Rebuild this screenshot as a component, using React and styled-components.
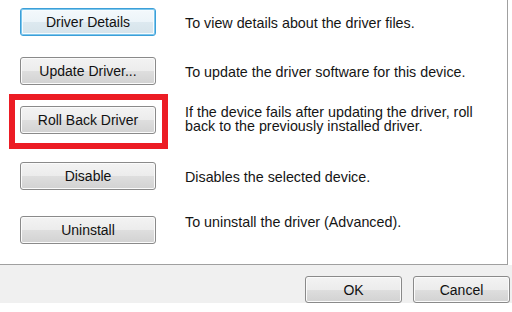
import styled, { createGlobalStyle } from "styled-components";

const GlobalStyle = createGlobalStyle`
    html, body {
        margin: 0;
        padding: 0;
        background: #ffffff;
    }
    body {
        font-family: "Liberation Sans", Arial, sans-serif;
    }
`;

const Page = styled.div`
    width: 512px;
    height: 312px;
    overflow: hidden;
    background: #ffffff;
    display: flex;
    flex-direction: column;
`;

const Panel = styled.div`
    width: 508px;
    height: 265px;
    box-sizing: border-box;
    background: #ffffff;
    border-right: 1px solid #a0a0a0;
    border-bottom: 1px solid #a0a0a0;
    padding: 8px 0 0 20px;
    display: flex;
    flex-direction: column;
`;

const Row = styled.div`
    display: flex;
    align-items: center;
    gap: 29px;
    margin-top: ${(p) => p.$space}px;
`;

const Button = styled.button`
    box-sizing: border-box;
    width: ${(p) => p.$width || 136}px;
    height: ${(p) => p.$height || 28}px;
    flex-shrink: 0;
    padding: 0;
    font-family: "Liberation Sans", Arial, sans-serif;
    font-size: 14px;
    color: #111;
    border-radius: 3px;
    border: 1px solid ${(p) => (p.$focused ? "#3c9fd8" : "#8a8a8a")};
    background: ${(p) =>
        p.$focused
            ? "linear-gradient(#f4f9fc 0%, #ecf4f9 50%, #dde9f0 51%, #d6e3ea 100%)"
            : "linear-gradient(#f3f3f3 0%, #ececec 50%, #dedede 51%, #d2d2d2 100%)"};
    box-shadow: ${(p) =>
        p.$focused
            ? "inset 0 0 0 1px #7cc6ec, inset 0 0 0 2px #f6fbfe"
            : "inset 0 0 0 1px #fbfbfb"};
`;

const Highlight = styled.span`
    position: relative;
    display: inline-flex;

    &::after {
        content: "";
        position: absolute;
        top: -12px;
        left: -11px;
        right: -12px;
        bottom: -15px;
        border: 6px solid #ec1c24;
        pointer-events: none;
    }
`;

const Description = styled.div`
    font-size: 14.3px;
    line-height: 14px;
    color: #151515;
    align-self: ${(p) => (p.$top ? "flex-start" : "center")};
    margin-top: ${(p) => (p.$top ? "-1px" : "2px")};
    width: 300px;
`;

const Footer = styled.div`
    height: 38px;
    box-sizing: border-box;
    background: #f0f0f0;
    display: flex;
    justify-content: flex-end;
    gap: 11px;
    padding: 11px 2px 0 0;
`;

const rows = [
    { label: "Driver Details", text: "To view details about the driver files.", space: 0, focused: true },
    { label: "Update Driver...", text: "To update the driver software for this device.", space: 21 },
    {
        label: "Roll Back Driver",
        text: "If the device fails after updating the driver, roll back to the previously installed driver.",
        space: 21,
        top: true,
        marked: true,
    },
    { label: "Disable", text: "Disables the selected device.", space: 28 },
    { label: "Uninstall", text: "To uninstall the driver (Advanced).", space: 26, top: true },
];

function App() {
    return (
        <Page>
            <GlobalStyle />
            <Panel>
                {rows.map((row) => {
                    const button = <Button $focused={row.focused}>{row.label}</Button>;
                    return (
                        <Row key={row.label} $space={row.space}>
                            {row.marked ? <Highlight>{button}</Highlight> : button}
                            <Description $top={row.top}>{row.text}</Description>
                        </Row>
                    );
                })}
            </Panel>
            <Footer>
                <Button $width={97} $height={27}>OK</Button>
                <Button $width={97} $height={27}>Cancel</Button>
            </Footer>
        </Page>
    );
}

export default App;
